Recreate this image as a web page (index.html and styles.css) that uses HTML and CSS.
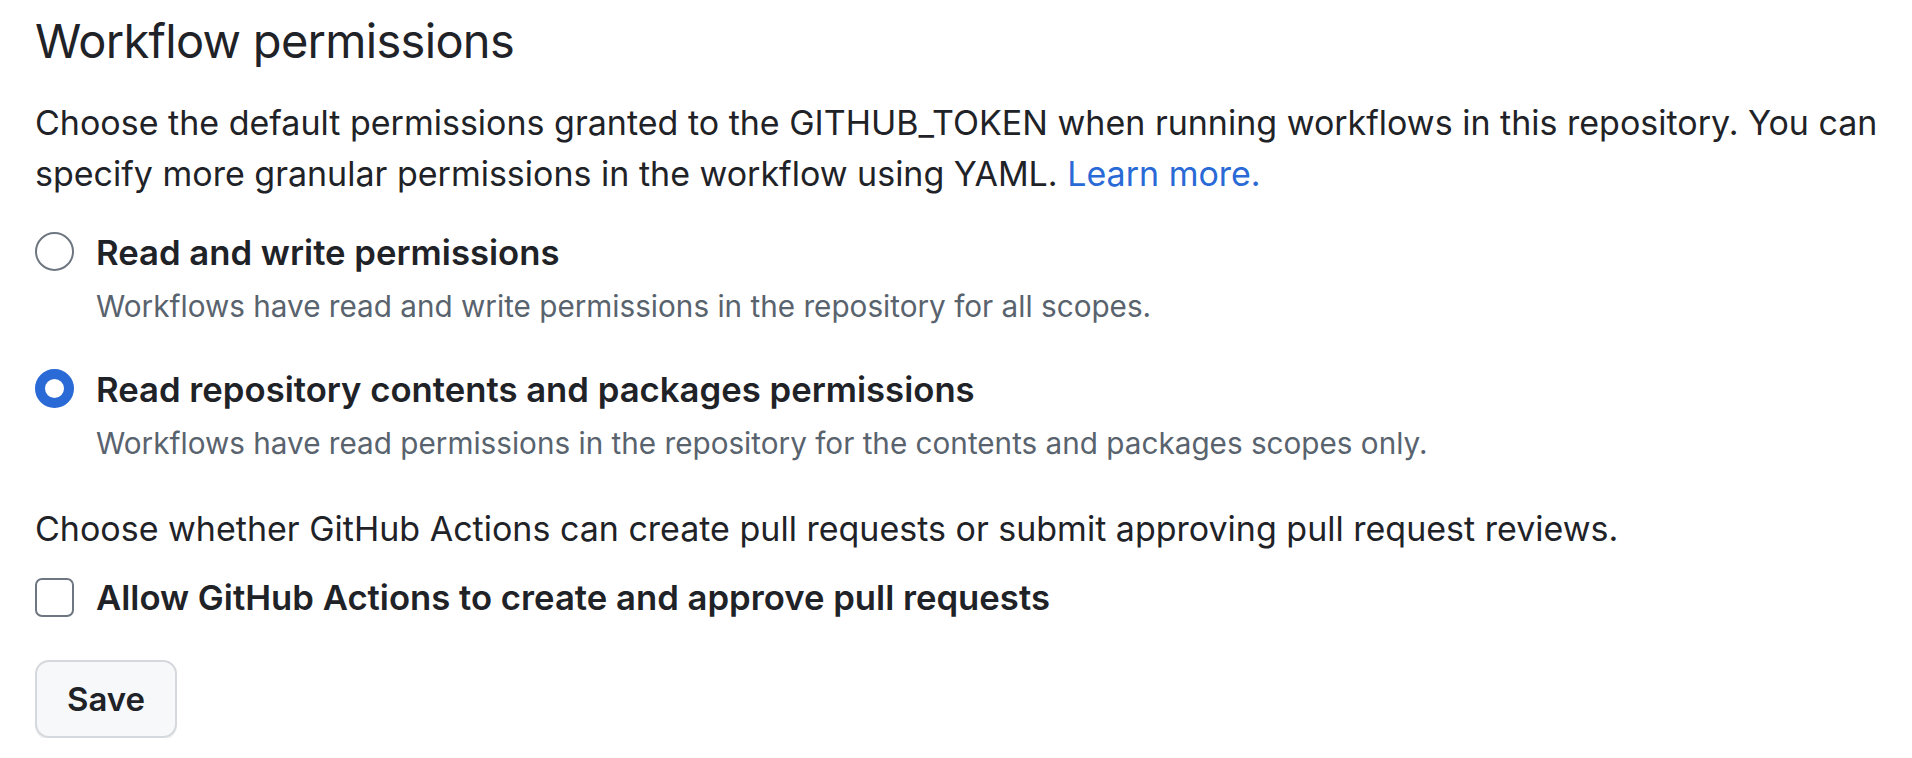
FILE: index.html
```html
<!DOCTYPE html>
<html lang="en">
<head>
<meta charset="utf-8">
<title>Workflow permissions</title>
<link rel="stylesheet" href="styles.css">
</head>
<body>
<main class="settings">
  <h2 class="heading">Workflow permissions</h2>
  <p class="lead">Choose the default permissions granted to the GITHUB_TOKEN when running workflows in this repository. You can specify more granular permissions in the workflow using YAML. <a class="link" href="#">Learn more.</a></p>

  <div class="option option-first">
    <span class="radio"></span>
    <div class="option-body">
      <div class="option-label">Read and write permissions</div>
      <div class="option-note">Workflows have read and write permissions in the repository for all scopes.</div>
    </div>
  </div>

  <div class="option option-second">
    <span class="radio radio-checked"></span>
    <div class="option-body">
      <div class="option-label">Read repository contents and packages permissions</div>
      <div class="option-note">Workflows have read permissions in the repository for the contents and packages scopes only.</div>
    </div>
  </div>

  <p class="lead lead-second">Choose whether GitHub Actions can create pull requests or submit approving pull request reviews.</p>

  <div class="option option-check">
    <span class="checkbox"></span>
    <div class="option-body">
      <div class="option-label">Allow GitHub Actions to create and approve pull requests</div>
    </div>
  </div>

  <button class="btn" type="button">Save</button>
</main>
</body>
</html>
```

FILE: styles.css
```css
html, body {
  margin: 0;
  padding: 0;
  background: #ffffff;
}

body {
  font-family: Inter, "Noto Sans", "Liberation Sans", sans-serif;
  color: #1f2328;
}

.settings {
  padding: 11px 20px 0 35px;
}

.heading {
  margin: 0;
  font-size: 47px;
  line-height: 60px;
  font-weight: 400;
  letter-spacing: -0.7px;
  color: #1f2328;
}

.lead {
  margin: 26px 0 0;
  font-size: 34px;
  line-height: 51px;
  color: #1f2328;
}

.link {
  color: #2a6ad6;
  text-decoration: none;
}

.option {
  display: flex;
  align-items: flex-start;
  gap: 22px;
}

.option-first {
  margin-top: 29px;
}

.option-second {
  margin-top: 38px;
}

.option-body {
  display: flex;
  flex-direction: column;
  gap: 9px;
}

.option-label {
  font-size: 34.7px;
  line-height: 48px;
  font-weight: 600;
  color: #1f2328;
}

.option-note {
  font-size: 29.7px;
  line-height: 42px;
  color: #59636e;
}

.radio {
  flex: none;
  box-sizing: border-box;
  width: 39px;
  height: 39px;
  margin-top: 4px;
  border-radius: 50%;
  border: 2px solid #6e7781;
  background: #ffffff;
}

.radio-checked {
  border: 10px solid #2a6ad6;
}

.lead-second {
  margin-top: 41px;
  line-height: 48px;
}

.option-check {
  margin-top: 20px;
}

.checkbox {
  flex: none;
  box-sizing: border-box;
  width: 39px;
  height: 39px;
  margin-top: 5px;
  border-radius: 7px;
  border: 2px solid #6e7781;
  background: #ffffff;
}

.btn {
  display: block;
  margin-top: 39px;
  box-sizing: border-box;
  width: 142px;
  height: 78px;
  padding: 0;
  font-family: Inter, "Noto Sans", "Liberation Sans", sans-serif;
  font-size: 33px;
  font-weight: 600;
  color: #1f2328;
  background: #f6f8fa;
  border: 2px solid #d5d8dc;
  border-radius: 14px;
  box-shadow: 0 2px 0 rgba(31, 35, 40, 0.06);
}
```
